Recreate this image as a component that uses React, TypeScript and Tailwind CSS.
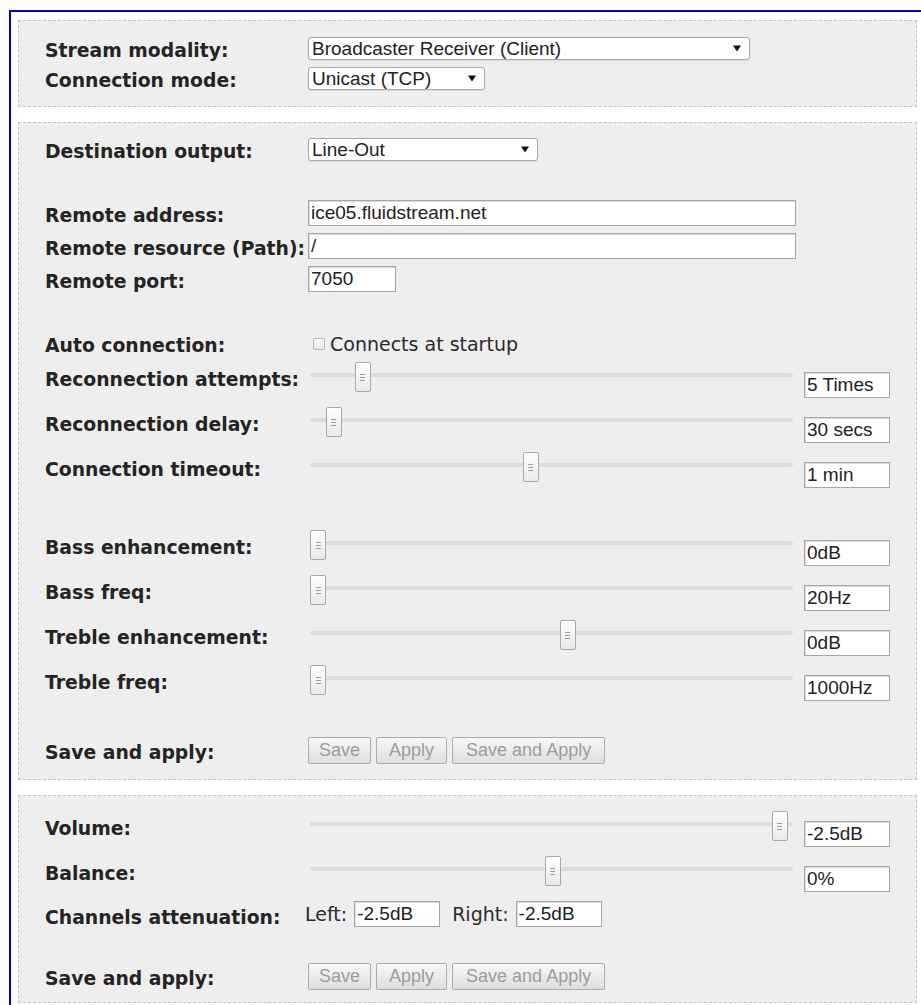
import type { ReactNode } from "react";

const labelText =
  "font-['DejaVu_Sans',Verdana,sans-serif] text-[18.8px] font-bold leading-[22px] text-[#242424]";
const plainText = "font-['DejaVu_Sans',Verdana,sans-serif] text-[19px] leading-[22px] text-[#2a2a2a]";
const fieldText = "font-['Liberation_Sans',Arial,sans-serif] text-[19px] leading-[22px] text-[#222]";

type SliderRowData = { label: string; pos: number; value: string };

const linkRows: SliderRowData[] = [
  { label: "Reconnection attempts:", pos: 0.096, value: "5 Times" },
  { label: "Reconnection delay:", pos: 0.034, value: "30 secs" },
  { label: "Connection timeout:", pos: 0.456, value: "1 min" },
];

const toneRows: SliderRowData[] = [
  { label: "Bass enhancement:", pos: 0, value: "0dB" },
  { label: "Bass freq:", pos: 0, value: "20Hz" },
  { label: "Treble enhancement:", pos: 0.535, value: "0dB" },
  { label: "Treble freq:", pos: 0, value: "1000Hz" },
];

const levelRows: SliderRowData[] = [
  { label: "Volume:", pos: 0.989, value: "-2.5dB" },
  { label: "Balance:", pos: 0.503, value: "0%" },
];

function Panel({ className, children }: { className: string; children: ReactNode }) {
  return (
    <section
      className={`flex flex-col border border-dashed border-[#c6c6c6] bg-[#eeeeee] pl-[26px] ${className}`}
    >
      {children}
    </section>
  );
}

function Label({ children, className = "" }: { children: ReactNode; className?: string }) {
  return <div className={`w-[263px] shrink-0 whitespace-nowrap ${labelText} ${className}`}>{children}</div>;
}

function Select({ value, width }: { value: string; width: string }) {
  return (
    <div
      className={`flex h-[23px] items-center rounded-[3px] border border-[#a8a8a8] bg-white pl-[3px] pr-[8px] shadow-[0_1px_1px_rgba(0,0,0,0.08)] ${width}`}
    >
      <span className={`${fieldText} whitespace-nowrap`}>{value}</span>
      <svg viewBox="0 0 8 7" className="ml-auto h-[7px] w-[8px] shrink-0" aria-hidden>
        <path d="M0 0.5h8L4 6.5z" fill="#111" />
      </svg>
    </div>
  );
}

function TextBox({ value, className }: { value: string; className: string }) {
  return (
    <div
      className={`flex items-center overflow-hidden border border-[#a6a6a6] bg-white pl-[2px] shadow-[inset_1px_1px_0_#dcdcdc] ${fieldText} whitespace-nowrap ${className}`}
    >
      {value}
    </div>
  );
}

function Slider({ pos }: { pos: number }) {
  return (
    <div className="relative h-[30px] w-[487px] shrink-0">
      <div className="absolute left-[2px] right-[2px] top-[11px] h-[4px] rounded-full bg-[#e0dbd4]" />
      <div
        className="absolute top-0 flex h-[30px] w-[16px] flex-col items-center justify-center gap-[2px] rounded-[2px] border border-[#a9a9a9] bg-gradient-to-b from-white to-[#e9e9e9]"
        style={{ left: 2 + pos * 467 }}
      >
        <span className="h-px w-[5px] bg-[#9c9c9c]" />
        <span className="h-px w-[5px] bg-[#9c9c9c]" />
        <span className="h-px w-[5px] bg-[#9c9c9c]" />
      </div>
    </div>
  );
}

function SliderRow({ row }: { row: SliderRowData }) {
  return (
    <div className="flex h-[45px] items-start">
      <Label className="pt-[7px]">{row.label}</Label>
      <Slider pos={row.pos} />
      <TextBox value={row.value} className="ml-[9px] mt-[10px] h-[26px] w-[86px]" />
    </div>
  );
}

function SaveRow({ className }: { className: string }) {
  const btn =
    "h-[27px] rounded-[2px] border border-[#ababab] bg-gradient-to-b from-[#f8f8f8] to-[#dedede] px-[10px] font-['Liberation_Sans',Arial,sans-serif] text-[18px] leading-[25px] text-[#9c9c9c]";
  return (
    <div className={`flex h-[27px] items-center ${className}`}>
      <Label className="pt-[5px]">Save and apply:</Label>
      <div className="flex gap-[5px]">
        <button className={btn} disabled>
          Save
        </button>
        <button className={`${btn} px-[12px]`} disabled>
          Apply
        </button>
        <button className={`${btn} px-[13px]`} disabled>
          Save and Apply
        </button>
      </div>
    </div>
  );
}

export default function App() {
  return (
    <div className="h-[1005px] w-[921px] overflow-hidden bg-white pt-[10px]">
      <div className="ml-[9px] border-l-2 border-t-2 border-[#0000cc] pb-[20px] pl-[7px] pt-[8px]">
        <div className="flex w-[899px] flex-col gap-[15px]">
          {/* stream */}
          <Panel className="pb-[16px] pt-[16px]">
            <div className="flex h-[23px] items-center">
              <Label className="pt-[4px]">Stream modality:</Label>
              <Select value="Broadcaster Receiver (Client)" width="w-[442px]" />
            </div>
            <div className="mt-[7px] flex h-[23px] items-center">
              <Label className="pt-[4px]">Connection mode:</Label>
              <Select value="Unicast (TCP)" width="w-[177px]" />
            </div>
          </Panel>

          {/* output + connection + tone */}
          <Panel className="pb-[15px] pt-[15px]">
            <div className="flex h-[23px] items-center">
              <Label className="pt-[5px]">Destination output:</Label>
              <Select value="Line-Out" width="w-[230px]" />
            </div>

            <div className="mt-[39px] flex h-[26px] items-center">
              <Label className="pt-[6px]">Remote address:</Label>
              <TextBox value="ice05.fluidstream.net" className="h-[26px] w-[488px]" />
            </div>
            <div className="mt-[7px] flex h-[26px] items-center">
              <Label className="pt-[6px]">Remote resource (Path):</Label>
              <TextBox value="/" className="h-[26px] w-[488px]" />
            </div>
            <div className="mt-[7px] flex h-[26px] items-center">
              <Label className="pt-[5px]">Remote port:</Label>
              <TextBox value="7050" className="h-[26px] w-[88px]" />
            </div>

            <div className="mt-[40px] flex h-[24px] items-center">
              <Label className="pt-[3px]">Auto connection:</Label>
              <span className="ml-[5px] h-[12px] w-[12px] rounded-[2px] border border-[#b5b5b5] bg-gradient-to-b from-[#fbfbfb] to-[#e6e6e6]" />
              <span className={`ml-[5px] ${plainText}`}>Connects at startup</span>
            </div>

            <div className="mt-[6px] flex flex-col">
              {linkRows.map((r) => (
                <SliderRow key={r.label} row={r} />
              ))}
            </div>

            <div className="mt-[33px] flex flex-col">
              {toneRows.map((r) => (
                <SliderRow key={r.label} row={r} />
              ))}
            </div>

            <SaveRow className="mt-[27px]" />
          </Panel>

          {/* levels */}
          <Panel className="pb-[12px] pt-[15px]">
            <div className="flex flex-col">
              {levelRows.map((r) => (
                <SliderRow key={r.label} row={r} />
              ))}
            </div>

            <div className="flex h-[26px] items-center">
              <Label className="pt-[7px]">Channels attenuation:</Label>
              <span className={`-ml-[3px] ${plainText}`}>Left:</span>
              <TextBox value="-2.5dB" className="ml-[7px] h-[26px] w-[86px]" />
              <span className={`ml-[12px] ${plainText}`}>Right:</span>
              <TextBox value="-2.5dB" className="ml-[7px] h-[26px] w-[86px]" />
            </div>

            <SaveRow className="mt-[36px]" />
          </Panel>
        </div>
      </div>
    </div>
  );
}
